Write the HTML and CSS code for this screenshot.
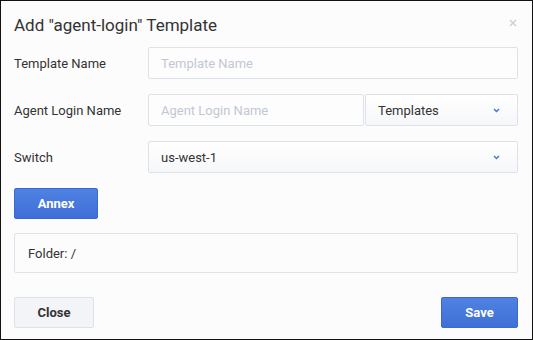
FILE: index.html
```html
<!DOCTYPE html>
<html lang="en">
<head>
    <meta charset="UTF-8">
    <title>Add Template</title>
    <link rel="stylesheet" href="styles.css">
</head>
<body>
    <div class="dialog">
        <div class="dialog-header">
            <h1>Add "agent-login" Template</h1>
            <span class="close-x">
                <svg width="8" height="8" viewBox="0 0 8 8"><path d="M1 1L7 7M7 1L1 7" stroke="#cfd2d7" stroke-width="1.6"/></svg>
            </span>
        </div>

        <div class="form-row">
            <label class="form-label">Template Name</label>
            <div class="field">
                <input class="text-input" type="text" placeholder="Template Name">
            </div>
        </div>

        <div class="form-row">
            <label class="form-label">Agent Login Name</label>
            <div class="field split">
                <input class="text-input" type="text" placeholder="Agent Login Name">
                <div class="select select-small">
                    <span>Templates</span>
                    <svg class="chevron" width="7" height="5" viewBox="0 0 7 5"><path d="M1 1L3.5 3.5L6 1" fill="none" stroke="#4a70e0" stroke-width="1.5"/></svg>
                </div>
            </div>
        </div>

        <div class="form-row">
            <label class="form-label">Switch</label>
            <div class="field">
                <div class="select">
                    <span>us-west-1</span>
                    <svg class="chevron" width="7" height="5" viewBox="0 0 7 5"><path d="M1 1L3.5 3.5L6 1" fill="none" stroke="#4a70e0" stroke-width="1.5"/></svg>
                </div>
            </div>
        </div>

        <button class="btn btn-primary btn-annex">Annex</button>

        <div class="folder-box">Folder: /</div>

        <div class="dialog-footer">
            <button class="btn btn-default">Close</button>
            <button class="btn btn-primary btn-save">Save</button>
        </div>
    </div>
</body>
</html>
```

FILE: styles.css
```css
* {
    box-sizing: border-box;
}

body {
    margin: 0;
    font-family: Roboto, "Liberation Sans", sans-serif;
    background-color: #fcfcfd;
}

.dialog {
    width: 533px;
    height: 340px;
    border: 1px solid #111;
    background-color: #fcfcfd;
    padding: 0 14px 0 13px;
    display: flex;
    flex-direction: column;
}

.dialog-header {
    display: flex;
    align-items: center;
    justify-content: space-between;
    height: 46px;
    padding-top: 1px;
}

.dialog-header h1 {
    margin: 0;
    font-size: 17px;
    font-weight: 400;
    color: #333;
}

.close-x {
    display: flex;
    margin-right: 1px;
    margin-top: -4px;
}

.form-row {
    display: flex;
    align-items: center;
    height: 32px;
    margin-bottom: 15px;
}

.form-label {
    width: 134px;
    font-size: 13px;
    color: #333;
}

.field {
    flex: 1;
    display: flex;
    height: 32px;
}

.field.split .text-input {
    flex: none;
    width: 216px;
}

.text-input {
    flex: 1;
    height: 32px;
    border: 1px solid #dde2ea;
    border-radius: 2px;
    background-color: #fdfdfe;
    padding: 0 12px;
    font-family: inherit;
    font-size: 13px;
    color: #333;
    outline: none;
}

.text-input::placeholder {
    color: #c2c8d2;
}

.select {
    flex: 1;
    display: flex;
    align-items: center;
    justify-content: space-between;
    height: 32px;
    border: 1px solid #dde2ea;
    border-radius: 2px;
    background: linear-gradient(#ffffff, #f6f7f9);
    padding: 0 17px 0 12px;
    font-size: 13px;
    color: #333;
}

.select-small {
    margin-left: 1px;
}

.chevron {
    margin-top: 1px;
}

.btn {
    height: 31px;
    border-radius: 2px;
    font-family: inherit;
    font-size: 13px;
    font-weight: 700;
    cursor: pointer;
}

.btn-primary {
    background: linear-gradient(#4f82e3, #3f6fd6);
    border: 1px solid #3a69d2;
    color: white;
}

.btn-default {
    background-color: #f2f4f7;
    border: 1px solid #dde2ea;
    color: #333;
}

.btn-annex {
    width: 84px;
}

.folder-box {
    margin-top: 14px;
    height: 40px;
    border: 1px solid #dde2ea;
    border-radius: 2px;
    display: flex;
    align-items: center;
    padding-left: 13px;
    font-size: 13px;
    color: #333;
}

.dialog-footer {
    margin-top: 24px;
    display: flex;
    justify-content: space-between;
}

.btn-default {
    width: 80px;
}

.btn-save {
    width: 77px;
}
```
